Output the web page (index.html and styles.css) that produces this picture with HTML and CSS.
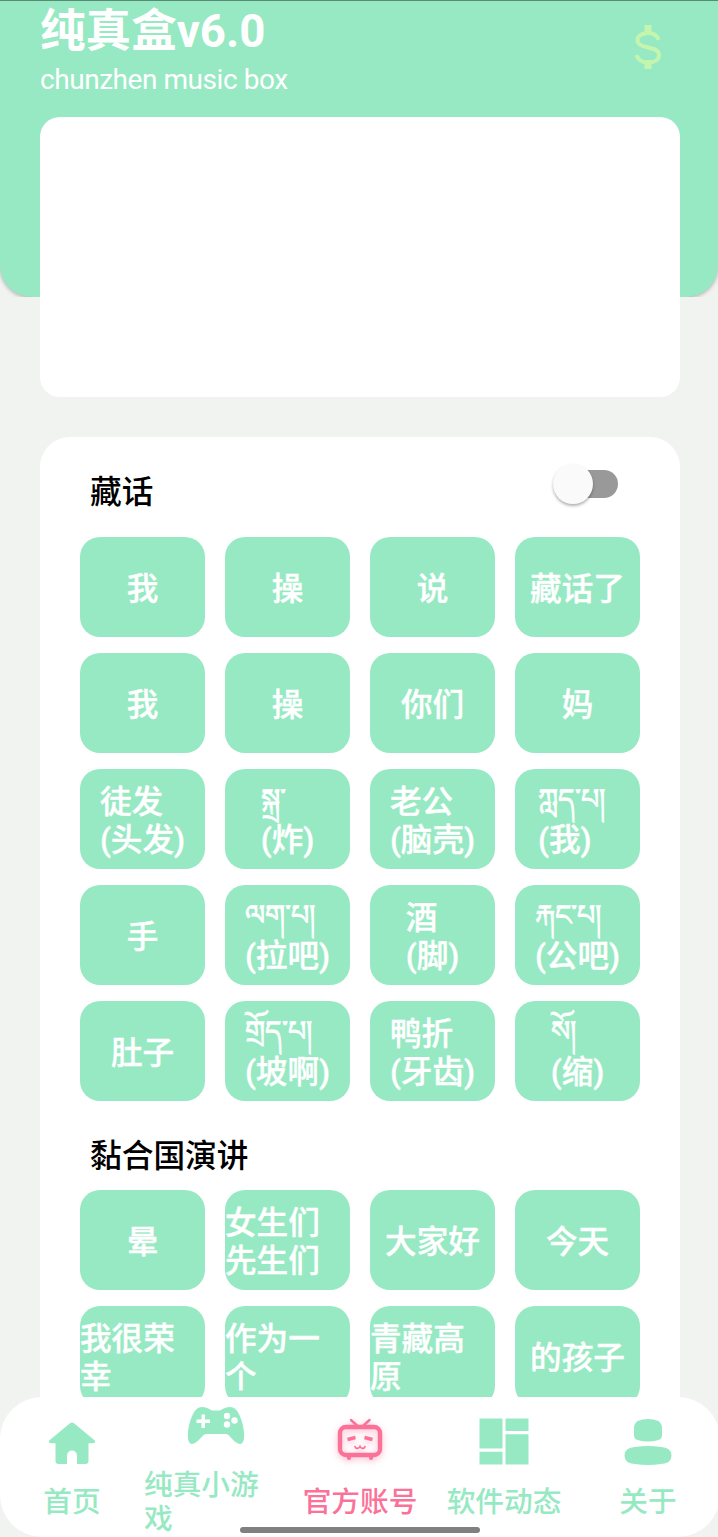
FILE: index.html
```
<!DOCTYPE html>
<html lang="zh-CN">
  <head>
    <meta charset="utf-8" />
    <meta name="viewport" content="width=device-width, initial-scale=1.0" />
    <title>纯真盒v6.0</title>
    <link rel="stylesheet" href="styles.css">
  </head>

  <body>
    <div class="app">
      <header class="header">
        <div>
          <h1>纯真盒v6.0</h1>
          <p>chunzhen music box</p>
        </div>
        <svg class="donate" width="30" height="48" viewBox="0 0 30 48">
          <path d="M15 2v9M15 37v9" stroke-width="7" />
          <path d="M25.500 17C24 12 20 10 15 10S4.500 12.500 4.500 17s4 6 10.500 7.500S26 27 26 32s-5 7.500-11 7.500S5 37 3.500 32" stroke-width="4" />
        </svg>
      </header>

      <main class="content">
        <section class="banner"></section>

        <section class="panel">
          <div class="panel-head">
            <h2>藏话</h2>
            <label class="switch"><span class="thumb"></span></label>
          </div>
          <div class="sounds">
            <button><span>我</span></button>
            <button><span>操</span></button>
            <button><span>说</span></button>
            <button><span>藏话了</span></button>

            <button><span>我</span></button>
            <button><span>操</span></button>
            <button><span>你们</span></button>
            <button><span>妈</span></button>

            <button><span>徒发<br>(头发)</span></button>
            <button><span><i>སྐྲ་</i><br>(炸)</span></button>
            <button><span>老公<br>(脑壳)</span></button>
            <button><span><i>ཀླད་པ།</i><br>(我)</span></button>

            <button><span>手</span></button>
            <button><span><i>ལག་པ།</i><br>(拉吧)</span></button>
            <button><span>酒<br>(脚)</span></button>
            <button><span><i>རྐང་པ།</i><br>(公吧)</span></button>

            <button><span>肚子</span></button>
            <button><span><i>གྲོད་པ།</i><br>(坡啊)</span></button>
            <button><span>鸭折<br>(牙齿)</span></button>
            <button><span><i>སོ།</i><br>(缩)</span></button>
          </div>

          <h2 class="second">黏合国演讲</h2>
          <div class="sounds">
            <button><span>晕</span></button>
            <button><span>女生们先生们</span></button>
            <button><span>大家好</span></button>
            <button><span>今天</span></button>

            <button><span>我很荣幸</span></button>
            <button><span>作为一个</span></button>
            <button><span>青藏高原</span></button>
            <button><span>的孩子</span></button>
          </div>
        </section>
      </main>

      <nav class="tabbar">
        <a class="tab">
          <svg viewBox="0 0 50 50">
            <path d="M23 5.200q2-1.500 4 0l20.500 17q1 1.200.300 2.300-.5.800-1.800.800H41.500V43q0 3-3 3H30V37.500a5 5 0 0 0-10 0V46h-8.500q-3 0-3-3V25.300H4q-1.300 0-1.800-.8-.7-1.100.3-2.300z" />
          </svg>
          <span>首页</span>
        </a>
        <a class="tab">
          <svg class="pad" viewBox="0 0 58 50">
            <path d="M11 7C15 5 20 6.500 23 8.500q1.500 1 3 1h6q1.500 0 3-1C38 6.500 43 5 47 7c5 3 9 14 10 24 .5 7-.5 12-4 12-3 0-7-4-11-8.500q-1.200-1.500-3-1.500H19q-1.800 0-3 1.500C12 39 8 43 5 43c-3.500 0-4.500-5-4-12C2 21 6 10 11 7z" />
            <path class="cut" d="M14.500 13.500h3.500v5h5v3.500h-5v5h-3.500v-5h-5v-3.500h5z" />
            <circle class="cut" cx="40" cy="15" r="3.200" />
            <circle class="cut" cx="40" cy="23.500" r="3.200" />
            <circle class="cut" cx="47.500" cy="19.500" r="3.200" />
          </svg>
          <span>纯真小游<br>戏</span>
        </a>
        <a class="tab active">
          <svg class="tv" viewBox="0 0 50 50">
            <path d="M16 2l6 5.500M34.500 2l-6 5.500" stroke-width="2.400" />
            <rect x="5" y="9" width="40" height="28" rx="6" stroke-width="4.400" />
            <path d="M14 39v1M36 39v1" stroke-width="4" />
            <path d="M12.500 21.500l8-2M37.500 21.500l-8-2" stroke-width="3.500" stroke-linecap="butt" />
            <path d="M20 28.500c.5 2.500 4 2.500 5 0 1 2.500 4.500 2.500 5 0" stroke-width="1.700" />
          </svg>
          <span>官方账号</span>
        </a>
        <a class="tab">
          <svg viewBox="0 0 50 50">
            <path d="M.5.500h23v30H.5zM26.500.500h23v12.500h-23zM.5 33.800h23V46.500H.5zM26.500 16.200h23V46.500h-23z" />
          </svg>
          <span>软件动态</span>
        </a>
        <a class="tab">
          <svg viewBox="0 0 50 50">
            <path d="M11 9.500Q11 6 14.500 3 25-1 35.500 3 39 6 39 9.500V17q0 4-3.500 5Q25 25 14.500 22 11 21 11 17zM12 29q13-2 26 0Q48.500 29.500 48.500 37.500T38 46q-13 2-26 0Q1.500 45.500 1.500 37.500T12 29z" />
          </svg>
          <span>关于</span>
        </a>
        <div class="gesture"></div>
      </nav>
    </div>
  </body>
</html>
```
FILE: styles.css
```
:root {
  --green: #97e9c3;
  --pink: #fb7299;
}

* {
  box-sizing: border-box;
}

body {
  margin: 0;
  background: #f1f3f1;
  font-family: Roboto, "Noto Sans CJK SC", sans-serif;
}

h1, h2, p {
  margin: 0;
}

.app {
  display: flex;
  flex-direction: column;
  height: 1537px;
  overflow: hidden;
}

.header {
  display: flex;
  flex-shrink: 0;
  justify-content: space-between;
  height: 297px;
  padding: 5px 55px 0 40px;
  border-top: 1px solid #588b74;
  border-radius: 0 0 32px 32px;
  background: var(--green);
  box-shadow: 0 1px 4px rgba(0, 0, 0, 0.3);
  clip-path: inset(0);
  color: #fff;
}

.header h1 {
  font-size: 45.6px;
  line-height: 52px;
}

.header p {
  font-size: 28px;
  line-height: 34px;
  letter-spacing: -0.45px;
  margin-top: 5px;
}

.donate {
  margin-top: 17px;
  fill: none;
  stroke: #c4f5ae;
}

.content {
  position: relative;
  flex: 1;
  min-height: 0;
  width: 640px;
  margin: -180px 0 0 40px;
  overflow: hidden;
}

.banner {
  height: 280px;
  border-radius: 20px;
  background: #fff;
}

.panel {
  margin-top: 40px;
  padding: 26px 40px 40px;
  border-radius: 30px;
  background: #fff;
}

.panel-head {
  display: flex;
  justify-content: space-between;
  height: 74px;
}

h2 {
  padding: 3px 0 0 10px;
  font-size: 31.7px;
  font-weight: 500;
  line-height: 54px;
  color: #000;
}

h2.second {
  height: 89px;
  padding-top: 29px;
}

.switch {
  display: flex;
  align-items: center;
  width: 63px;
  height: 28px;
  margin: 7px 22px 0 0;
  border-radius: 14px;
  background: #999;
}

.thumb {
  flex-shrink: 0;
  width: 40px;
  height: 40px;
  margin-left: -2px;
  border-radius: 50%;
  background: #fafafa;
  box-shadow: 0 2px 3px rgba(0, 0, 0, 0.3);
}

.sounds {
  display: grid;
  grid-template-columns: repeat(4, 125px);
  grid-auto-rows: 100px;
  gap: 16px 20px;
}

.sounds button {
  display: flex;
  align-items: center;
  justify-content: center;
  padding: 6px 0 0;
  border: 0;
  border-radius: 20px;
  background: var(--green);
  color: #fff;
  font-family: inherit;
  font-size: 31.6px;
  font-weight: 500;
  line-height: 38px;
  text-align: left;
  -webkit-text-stroke: 0.4px #fff;
}

/* tibetan lines */
.sounds i {
  padding-right: 12px;
  font-size: 28.5px;
  font-style: normal;
  line-height: 1;
  vertical-align: 4px;
  -webkit-text-stroke: 0.8px #fff;
}

.tabbar {
  position: relative;
  display: flex;
  flex-shrink: 0;
  width: 720px;
  height: 140px;
  border-radius: 42px;
  background: #fff;
}

.tab {
  display: flex;
  flex-direction: column;
  align-items: center;
  justify-content: center;
  gap: 17px;
  width: 144px;
  padding-top: 3px;
  color: var(--green);
  font-size: 28.7px;
  font-weight: 500;
  line-height: 34px;
  white-space: nowrap;
}

.tab svg {
  width: 50px;
  height: 50px;
  fill: currentColor;
}

.tab .pad {
  width: 58px;
}

.tab .pad + span {
  width: 144px;
}

.tab .cut {
  fill: #fff;
}

.tab .tv {
  fill: none;
  stroke: currentColor;
  stroke-linecap: round;
  filter: drop-shadow(0 2px 3px rgba(251, 114, 153, 0.5));
}

.tab.active {
  color: var(--pink);
}

/* system gesture handle, lies over the bar */
.gesture {
  position: absolute;
  left: 240px;
  bottom: 4px;
  width: 240px;
  height: 6px;
  border-radius: 3px;
  background: #808080;
}
```
